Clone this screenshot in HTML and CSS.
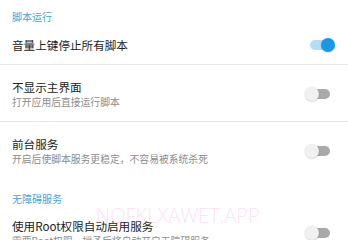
FILE: index.html
```html
<!DOCTYPE html>
<html lang="zh-CN">
<head>
<meta charset="utf-8">
<link rel="stylesheet" href="styles.css">
</head>
<body>
<div class="page">
  <div class="cat cat-first">脚本运行</div>
  <div class="row row-single">
    <div class="texts"><div class="title">音量上键停止所有脚本</div></div>
    <div class="switch on"><span class="track"></span><span class="knob"></span></div>
  </div>
  <div class="divider"></div>
  <div class="row">
    <div class="texts">
      <div class="title">不显示主界面</div>
      <div class="sub">打开应用后直接运行脚本</div>
    </div>
    <div class="switch"><span class="track"></span><span class="knob"></span></div>
  </div>
  <div class="divider"></div>
  <div class="row">
    <div class="texts">
      <div class="title">前台服务</div>
      <div class="sub">开启后使脚本服务更稳定，不容易被系统杀死</div>
    </div>
    <div class="switch"><span class="track"></span><span class="knob"></span></div>
  </div>
  <div class="cat cat-second">无障碍服务</div>
  <div class="row">
    <div class="texts">
      <div class="title">使用Root权限自动启用服务</div>
      <div class="sub">需要Root权限，授予后将自动开启无障碍服务</div>
    </div>
    <div class="switch"><span class="track"></span><span class="knob"></span></div>
  </div>
  <div class="watermark"><span class="wm-dot">•</span>NOFKLXAWET.APP</div>
</div>
</body>
</html>
```
FILE: styles.css
```css
html, body {
  margin: 0;
  padding: 0;
  background: #ffffff;
}
body {
  width: 348px;
  height: 240px;
  overflow: hidden;
  font-family: "Noto Sans CJK SC", "Noto Sans", sans-serif;
}
.page {
  position: relative;
  width: 348px;
}
.cat {
  color: #3fa3e0;
  font-size: 10px;
  line-height: 12px;
  padding-left: 12px;
  box-sizing: border-box;
}
.cat-first {
  height: 30px;
  padding-top: 11px;
}
.cat-second {
  height: 26px;
  padding-top: 15px;
  line-height: 11px;
}
.row {
  display: flex;
  align-items: center;
  padding: 14px 13px 12px 12px;
  height: 56px;
  box-sizing: border-box;
}
.row-single {
  height: 34px;
  padding-top: 7px;
  padding-bottom: 11px;
}
.texts {
  flex: 1;
  min-width: 0;
}
.title {
  color: #222222;
  font-size: 11.6px;
  line-height: 16px;
  white-space: nowrap;
}
.sub {
  color: #8c8c8c;
  font-size: 9.8px;
  line-height: 14px;
  white-space: nowrap;
}
.divider {
  height: 1px;
  background: #e6e6e6;
}
.switch {
  position: relative;
  width: 30px;
  height: 14px;
  flex: none;
}
.track {
  position: absolute;
  left: 5px;
  right: 5px;
  top: 2px;
  height: 10px;
  border-radius: 5px;
  background: #a9a9a9;
}
.knob {
  position: absolute;
  top: 0;
  left: 0;
  width: 14px;
  height: 14px;
  border-radius: 50%;
  background: #f1f1f1;
  box-shadow: 0 0.5px 1.5px rgba(0, 0, 0, 0.25);
}
.switch.on .track {
  background: #b5dcf6;
}
.switch.on .knob {
  left: auto;
  right: 0;
  background: #1a98e6;
  box-shadow: 0 0.5px 1.5px rgba(0, 0, 0, 0.2);
}
.watermark {
  position: absolute;
  left: 90px;
  top: 205px;
  font-family: "Open Sans", sans-serif;
  font-weight: 300;
  font-size: 20px;
  line-height: 22px;
  color: rgba(250, 190, 230, 0.45);
  white-space: nowrap;
  pointer-events: none;
}
.wm-dot {
  font-size: 10px;
  margin-right: 2px;
}
```
